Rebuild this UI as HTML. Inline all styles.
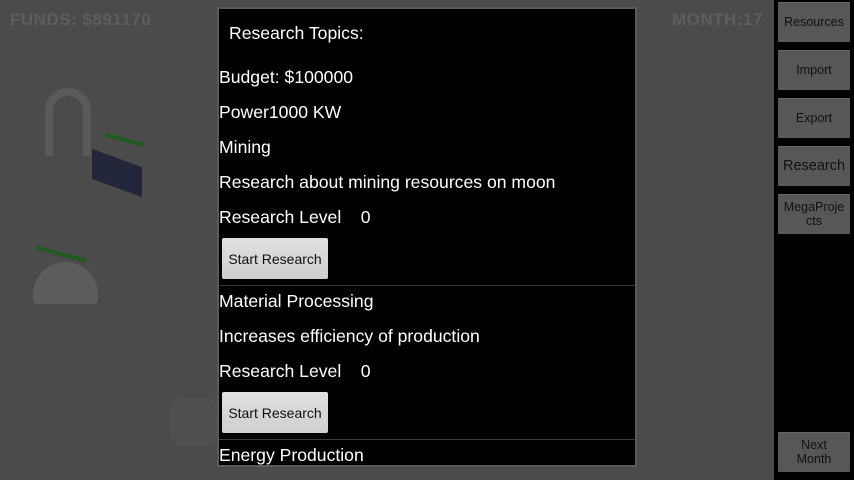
<!DOCTYPE html>
<html><head><style>
body{margin:0;width:854px;height:480px;overflow:hidden;background:#4b4b4b;font-family:"Liberation Sans",sans-serif;position:relative}
.abs{position:absolute}
.hud{color:#5e5e5e;font-weight:bold;font-size:17px;letter-spacing:0.5px}
.side{left:774px;top:0;width:80px;height:480px;background:#000}
.btn{left:778px;width:72px;height:40px;background:#575757;color:#111;font-size:12.5px;text-align:center;display:flex;align-items:center;justify-content:center;line-height:14px;border-radius:1px;box-shadow:inset 0 1px 0 #666}
.dlg{left:217px;top:7px;width:416px;height:456px;background:#000;border:2px solid #5a5a5a}
.t{position:absolute;left:0;color:#fff;font-size:17.6px;white-space:nowrap}
.sb{position:absolute;left:3px;width:106px;height:41px;background:linear-gradient(#e0e0e0,#cfcfcf);color:#111;font-size:14px;display:flex;align-items:center;justify-content:center;border-radius:2px}
.hr{position:absolute;left:0;width:416px;height:1px;background:#3a3a3a}
</style></head><body>
<div class="abs hud" style="left:10px;top:10px">FUNDS: $891170</div>
<div class="abs hud" style="left:672px;top:10px">MONTH:17</div>
<div class="abs" style="left:45px;top:88px;width:30px;height:60px;border:8px solid #5a5a5a;border-radius:40px 40px 0 0;border-bottom:none"></div>
<div class="abs" style="left:92px;top:158px;width:50px;height:30px;background:#22263a;transform:skewY(20deg)"></div>
<div class="abs" style="left:105px;top:138px;width:40px;height:4px;background:#1f5a1f;transform:rotate(15deg)"></div>
<div class="abs" style="left:33px;top:262px;width:65px;height:42px;background:#5c5c5c;border-radius:35px 35px 4px 4px"></div>
<div class="abs" style="left:35px;top:252px;width:52px;height:4px;background:#1f5a1f;transform:rotate(15deg)"></div>
<div class="abs" style="left:170px;top:398px;width:48px;height:48px;background:#505050;border-radius:12px"></div>
<div class="abs side"></div>
<div class="abs btn" style="top:2px">Resources</div>
<div class="abs btn" style="top:50px">Import</div>
<div class="abs btn" style="top:98px">Export</div>
<div class="abs btn" style="top:146px;font-size:14.5px">Research</div>
<div class="abs btn" style="top:194px">MegaProje<br>cts</div>
<div class="abs btn" style="top:432px">Next<br>Month</div>
<div class="abs dlg">
<div class="t" style="left:10px;top:14px">Research Topics:</div>
<div class="t" style="top:58px">Budget: $100000</div>
<div class="t" style="top:93px">Power1000 KW</div>
<div class="t" style="top:128px">Mining</div>
<div class="t" style="top:163px">Research about mining resources on moon</div>
<div class="t" style="top:198px">Research Level&nbsp;&nbsp;&nbsp;&nbsp;0</div>
<div class="sb" style="top:229px">Start Research</div>
<div class="hr" style="top:276px"></div>
<div class="t" style="top:282px">Material Processing</div>
<div class="t" style="top:317px">Increases efficiency of production</div>
<div class="t" style="top:352px">Research Level&nbsp;&nbsp;&nbsp;&nbsp;0</div>
<div class="sb" style="top:383px">Start Research</div>
<div class="hr" style="top:430px"></div>
<div class="t" style="top:436px">Energy Production</div>
</div>
</body></html>
